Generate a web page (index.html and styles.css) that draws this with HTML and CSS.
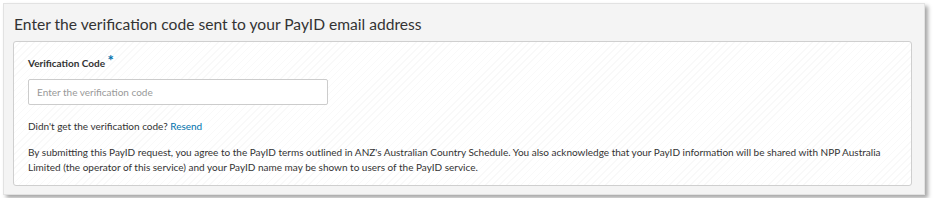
FILE: index.html
```html
<!DOCTYPE html>
<html lang="en">
<head>
    <meta charset="UTF-8">
    <meta name="viewport" content="width=device-width, initial-scale=1.0">
    <title>PayID verification</title>
    <link rel="stylesheet" href="styles.css">
</head>
<body>
    <!-- Verification Panel -->
    <div class="panel">
        <h2 class="panel-title">Enter the verification code sent to your PayID email address</h2>

        <div class="card">
            <form class="form" onsubmit="return false">
                <label for="code" class="label">Verification Code <span class="required">*</span></label>
                <input type="text" id="code" class="input" placeholder="Enter the verification code">
            </form>

            <p class="resend">Didn't get the verification code? <a href="#" class="link">Resend</a></p>

            <p class="terms">By submitting this PayID request, you agree to the PayID terms outlined in ANZ's Australian Country Schedule. You also acknowledge that your PayID information will be shared with NPP Australia Limited (the operator of this service) and your PayID name may be shown to users of the PayID service.</p>
        </div>
    </div>
</body>
</html>
```

FILE: styles.css
```css
/* General Styles */
body {
    margin: 0;
    padding: 3px;
    font-family: 'Lato', 'Liberation Sans', sans-serif;
    background: #fff;
    color: #333;
}

/* Panel */
.panel {
    width: 899px;
    background: #f4f4f4;
    border: 1px solid #e2e2e2;
    box-shadow: 3px 3px 4px rgba(0, 0, 0, 0.35);
    padding: 0 12px 8px 9px;
}

.panel-title {
    margin: 0;
    padding: 9px 0 6px 1px;
    font-size: 15.6px;
    font-weight: normal;
    line-height: 22px;
    color: #333;
}

/* Card */
.card {
    background: repeating-linear-gradient(135deg, #fff 0, #fff 4px, #f9f9f9 4px, #f9f9f9 5px);
    border: 1px solid #cfcfcf;
    border-radius: 3px;
    padding: 14px 14px 10px 14px;
}

.form {
    display: flex;
    flex-direction: column;
}

.label {
    font-size: 10px;
    font-weight: bold;
    line-height: 14px;
    color: #333;
    margin-bottom: 9px;
}

.required {
    color: #0072ac;
    font-size: 15px;
    line-height: 10px;
    vertical-align: top;
    position: relative;
    top: -1px;
}

.input {
    width: 300px;
    height: 26px;
    box-sizing: border-box;
    padding: 0 8px;
    border: 1px solid #ccc;
    border-radius: 2px;
    background: #fff;
    font-family: inherit;
    font-size: 10px;
    outline: none;
}

.input::placeholder {
    color: #999;
}

.resend {
    margin: 14px 0 0;
    font-size: 10px;
    line-height: 14px;
}

.link {
    color: #0072ac;
    text-decoration: none;
}

.terms {
    margin: 12px 0 0;
    font-size: 10px;
    line-height: 15px;
}
```
